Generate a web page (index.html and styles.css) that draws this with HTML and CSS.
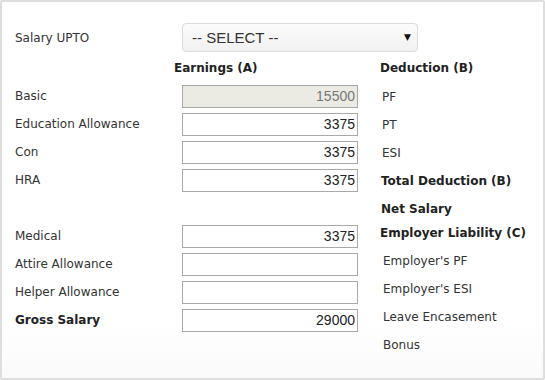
FILE: index.html
```html
<!DOCTYPE html>
<html>
<head>
<meta name="viewport" content="width=device-width, initial-scale=1">
<link rel="stylesheet" href="styles.css">
</head>
<body>

<div class="panel">

  <div class="top-row">
    <label class="lbl">Salary UPTO</label>
    <div class="select-wrap">
      <select class="salary-select">
        <option>-- SELECT --</option>
      </select>
      <span class="arrow">&#9660;</span>
    </div>
  </div>

  <div class="cols">

    <div class="earnings">
      <div class="head">Earnings (A)</div>

      <label class="lbl">Basic</label>
      <input class="amt" type="text" value="15500" disabled>

      <label class="lbl">Education Allowance</label>
      <input class="amt" type="text" value="3375">

      <label class="lbl">Con</label>
      <input class="amt" type="text" value="3375">

      <label class="lbl">HRA</label>
      <input class="amt" type="text" value="3375">

      <div class="blank"></div>

      <label class="lbl">Medical</label>
      <input class="amt" type="text" value="3375">

      <label class="lbl">Attire Allowance</label>
      <input class="amt" type="text" value="">

      <label class="lbl">Helper Allowance</label>
      <input class="amt" type="text" value="">

      <label class="lbl bold">Gross Salary</label>
      <input class="amt" type="text" value="29000">
    </div>

    <div class="deduction">
      <div class="head">Deduction (B)</div>
      <div class="item first">PF</div>
      <div class="item">PT</div>
      <div class="item">ESI</div>
      <div class="item bold">Total Deduction (B)</div>
      <div class="item bold">Net Salary</div>
      <div class="item bold liab">Employer Liability (C)</div>
      <div class="item sub">Employer's PF</div>
      <div class="item sub">Employer's ESI</div>
      <div class="item sub">Leave Encasement</div>
      <div class="item sub">Bonus</div>
    </div>

  </div>
</div>

</body>
</html>
```

FILE: styles.css
```css
body {
    margin: 0;
    background: #fff;
    font-family: "DejaVu Sans", Verdana, sans-serif;
    font-size: 12px;
    color: #333;
}

.panel {
    width: 545px;
    height: 380px;
    box-sizing: border-box;
    border: 2px solid #dedede;
    border-radius: 2px;
    padding: 21px 0 0 13px;
    background: linear-gradient(to bottom, #fff 0, #fff 320px, #fafafa 100%);
}

.top-row {
    display: flex;
    align-items: center;
    height: 29px;
}

.top-row .lbl {
    width: 167px;
}

.select-wrap {
    position: relative;
    width: 236px;
    height: 29px;
}

.salary-select {
    appearance: none;
    -webkit-appearance: none;
    width: 100%;
    height: 100%;
    box-sizing: border-box;
    border: 1px solid #dcdcdc;
    border-radius: 4px;
    background: linear-gradient(to bottom, #fcfcfc, #f1f1f1);
    font-family: "Liberation Sans", Arial, sans-serif;
    font-size: 15px;
    color: #333;
    padding: 0 0 0 9px;
    outline: none;
}

.arrow {
    position: absolute;
    right: 7px;
    top: 9px;
    font-size: 9px;
    color: #111;
    pointer-events: none;
}

.cols {
    display: flex;
    margin-top: 2px;
}

.lbl {
    line-height: 28px;
}

.bold {
    font-weight: bold;
    color: #222;
}

.head {
    font-weight: bold;
    color: #222;
    height: 28px;
    line-height: 28px;
}

.earnings {
    display: grid;
    grid-template-columns: 167px 176px;
    grid-auto-rows: 28px;
    align-items: center;
    width: 365px;
}

.earnings .head {
    grid-column: 2;
    margin-left: -8px;
}

.blank {
    grid-column: 1 / 3;
}

.amt {
    box-sizing: border-box;
    width: 176px;
    height: 23px;
    border: 1px solid #a9a9a9;
    background: #fff;
    font-family: "Liberation Sans", Arial, sans-serif;
    font-size: 14px;
    color: #222;
    text-align: right;
    padding: 0 2px 0 2px;
    margin: 0;
}

.amt:disabled {
    background: #ebebe4;
    color: #777;
}

.deduction {
    display: flex;
    flex-direction: column;
}

.item {
    height: 28px;
    line-height: 28px;
    padding-left: 2px;
}

.item.first {
    margin-top: 1px;
}

.item.bold {
    padding-left: 1px;
}

.item.liab {
    height: 25px;
    line-height: 22px;
    padding-left: 0;
    margin-top: -1px;
}

.item.sub {
    padding-left: 3px;
}
```
